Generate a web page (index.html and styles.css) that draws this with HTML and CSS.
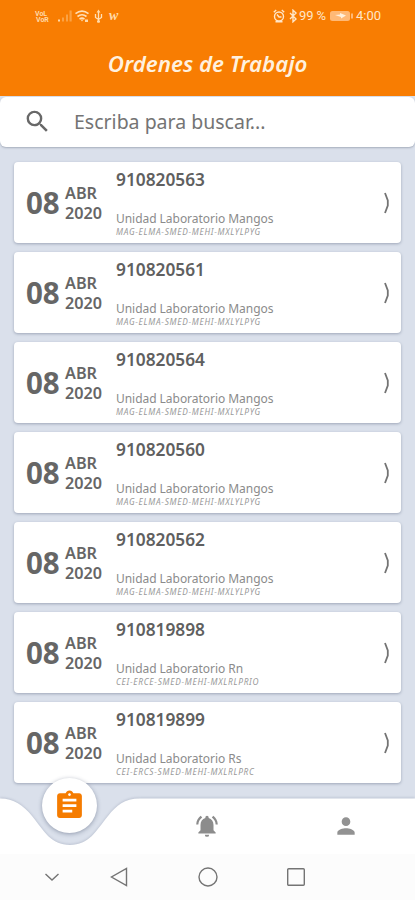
FILE: index.html
```
<!DOCTYPE html>
<html lang="es">
<head>
<meta charset="utf-8">
<meta name="viewport" content="width=device-width, initial-scale=1">
<title>Ordenes de Trabajo</title>
<link rel="stylesheet" href="styles.css">
</head>
<body>
<div class="app">
  <header class="header">
    <div class="status">
      <svg class="status-left" width="90" height="16" viewBox="0 0 90 16" fill="#ffd9a8">
        <text x="1" y="7.500" class="tiny">VoL</text><text x="2" y="14" class="tiny">VoR</text>
        <path d="M24 11.500h2v2h-2z"/>
        <g opacity=".4"><path d="M28 9.500h2v4h-2zM32 6.500h2v7h-2zM35.500 2.500h2.200v11h-2.200z"/></g>
        <g fill="none" stroke="#ffe0b8" stroke-width="1.600"><path d="M41.500 5.700q6.500-5.200 13 0M43.500 8.500q4.500-3.500 9 0M45.500 11.100q2.500-1.900 5 0"/><path d="M64.500 3v11.500M61.500 6v3.500l3 2 3-2V6" stroke-width="1.300"/></g>
        <path d="M46.500 11.500h3l-1.500 2zM51 11.500h3V14h-3zM62.500 4.500l2-3 2 3zM63 12.500h3v2h-3z"/>
        <text x="75" y="12" class="w-mark">w</text>
      </svg>
      <div class="status-right">
        <svg width="25" height="14" viewBox="0 0 25 14" fill="none" stroke="#ffe6c8" stroke-width="1.400"><circle cx="6" cy="7.500" r="4.500"/><path d="M.8 3.200L3.200 1M11.200 3.200L8.800 1M4 5.500l2 2.500h2.500M2.500 12.800h7M17 4l6 6-3 2.800V1.200L23 4l-6 6"/></svg>
        <span class="percent">99 %</span>
        <svg width="24" height="12" viewBox="0 0 24 12"><rect x="0" y="1" width="20" height="10" rx="2.500" fill="#ffb976"/><path d="M21 3.500h2v5h-2z" fill="#ffb976"/><path d="M5 5l5-.5V3l6 2.500-5 3V7z" fill="#fff0dc"/></svg>
        <span class="clock">4:00</span>
      </div>
    </div>
    <h1 class="title">Ordenes de Trabajo</h1>
  </header>

  <div class="search">
    <svg width="29" height="29" viewBox="0 0 24 24" fill="#686868"><path d="M15.500 14h-.79l-.28-.27A6.470 6.470 0 0 0 16 9.500 6.500 6.500 0 1 0 9.500 16c1.610 0 3.090-.59 4.230-1.570l.27.28v.79l5 4.990L20.490 19l-4.990-5zm-6 0C7.010 14 5 11.990 5 9.500S7.010 5 9.500 5 14 7.010 14 9.500 11.990 14 9.500 14z"/></svg>
    <span class="placeholder">Escriba para buscar...</span>
  </div>

  <main class="list">
    <article class="card"><div class="day">08</div><div class="date"><span>ABR</span><span>2020</span></div><div class="info"><div class="number">910820563</div><div class="unit">Unidad Laboratorio Mangos</div><div class="code">MAG-ELMA-SMED-MEHI-MXLYLPYG</div></div><svg class="chevron" viewBox="0 0 8 22"><path d="M3 1L5.800 8.500V13.500L3 21"/></svg></article>
    <article class="card"><div class="day">08</div><div class="date"><span>ABR</span><span>2020</span></div><div class="info"><div class="number">910820561</div><div class="unit">Unidad Laboratorio Mangos</div><div class="code">MAG-ELMA-SMED-MEHI-MXLYLPYG</div></div><svg class="chevron" viewBox="0 0 8 22"><path d="M3 1L5.800 8.500V13.500L3 21"/></svg></article>
    <article class="card"><div class="day">08</div><div class="date"><span>ABR</span><span>2020</span></div><div class="info"><div class="number">910820564</div><div class="unit">Unidad Laboratorio Mangos</div><div class="code">MAG-ELMA-SMED-MEHI-MXLYLPYG</div></div><svg class="chevron" viewBox="0 0 8 22"><path d="M3 1L5.800 8.500V13.500L3 21"/></svg></article>
    <article class="card"><div class="day">08</div><div class="date"><span>ABR</span><span>2020</span></div><div class="info"><div class="number">910820560</div><div class="unit">Unidad Laboratorio Mangos</div><div class="code">MAG-ELMA-SMED-MEHI-MXLYLPYG</div></div><svg class="chevron" viewBox="0 0 8 22"><path d="M3 1L5.800 8.500V13.500L3 21"/></svg></article>
    <article class="card"><div class="day">08</div><div class="date"><span>ABR</span><span>2020</span></div><div class="info"><div class="number">910820562</div><div class="unit">Unidad Laboratorio Mangos</div><div class="code">MAG-ELMA-SMED-MEHI-MXLYLPYG</div></div><svg class="chevron" viewBox="0 0 8 22"><path d="M3 1L5.800 8.500V13.500L3 21"/></svg></article>
    <article class="card"><div class="day">08</div><div class="date"><span>ABR</span><span>2020</span></div><div class="info"><div class="number">910819898</div><div class="unit">Unidad Laboratorio Rn</div><div class="code">CEI-ERCE-SMED-MEHI-MXLRLPRIO</div></div><svg class="chevron" viewBox="0 0 8 22"><path d="M3 1L5.800 8.500V13.500L3 21"/></svg></article>
    <article class="card"><div class="day">08</div><div class="date"><span>ABR</span><span>2020</span></div><div class="info"><div class="number">910819899</div><div class="unit">Unidad Laboratorio Rs</div><div class="code">CEI-ERCS-SMED-MEHI-MXLRLPRC</div></div><svg class="chevron" viewBox="0 0 8 22"><path d="M3 1L5.800 8.500V13.500L3 21"/></svg></article>
  </main>

  <nav class="tabs">
    <svg class="tabs-shape" width="415" height="56" viewBox="0 0 415 56"><path d="M0 .5C14 .5 23 7 32 18C44 33 51 47 70 47S96 33 108 18C117 7 124 .5 140 .5H415V56H0Z" fill="#fff"/></svg>
    <div class="tab tab-active"><span class="bubble"><svg width="33" height="33" viewBox="0 0 24 24" fill="#f57c00"><path d="M19 3h-4.180C14.400 1.840 13.300 1 12 1s-2.400.84-2.820 2H5c-1.100 0-2 .9-2 2v14c0 1.100.9 2 2 2h14c1.100 0 2-.9 2-2V5c0-1.100-.9-2-2-2zm-7 0c.55 0 1 .45 1 1s-.45 1-1 1-1-.45-1-1 .45-1 1-1zm2 14H7v-2h7v2zm3-4H7v-2h10v2zm0-4H7V7h10v2z"/></svg></span></div>
    <div class="tab"><svg width="26" height="26" viewBox="0 0 24 24" fill="#8c8c8c"><path d="M7.580 4.080L6.150 2.650C3.750 4.480 2.170 7.300 2.030 10.500h2a8.450 8.450 0 0 1 3.550-6.420zM19.970 10.500h2c-.15-3.200-1.730-6.020-4.120-7.850l-1.420 1.430a8.500 8.500 0 0 1 3.540 6.420zM18 11c0-3.070-1.640-5.640-4.500-6.320V4a1.500 1.500 0 0 0-3 0v.68C7.630 5.360 6 7.920 6 11v5l-2 2v1h16v-1l-2-2v-5zm-6 11a2 2 0 0 0 2-2h-4a2 2 0 0 0 2 2z"/></svg></div>
    <div class="tab"><svg width="26" height="26" viewBox="0 0 24 24" fill="#929292"><path d="M12 12c2.210 0 4-1.790 4-4s-1.790-4-4-4-4 1.790-4 4 1.790 4 4 4zm0 2c-2.670 0-8 1.340-8 4v2h16v-2c0-2.660-5.330-4-8-4z"/></svg></div>
  </nav>

  <footer class="system">
    <svg width="16" height="20" viewBox="0 0 16 20"><path d="M1.500 7L8 13l6.500-6"/></svg>
    <svg width="18" height="20" viewBox="0 0 18 20"><path d="M16.500 1.500v17L1.500 10z"/></svg>
    <svg width="20" height="20" viewBox="0 0 20 20"><circle cx="10" cy="10" r="9"/></svg>
    <svg width="20" height="20" viewBox="0 0 20 20"><rect x="1.700" y="1.700" width="16.600" height="16.600" rx="1"/></svg>
  </footer>
</div>
</body>
</html>
```
FILE: styles.css
```
* { box-sizing: border-box; }
body { margin: 0; font-family: "Noto Sans", "Open Sans", sans-serif; color: #666; }
.app { width: 415px; height: 900px; display: flex; flex-direction: column; background: #dae0eb; overflow: hidden; }
.header { height: 96px; flex: none; background: #f87d02; color: #fff1df; padding-top: 8px; }
.status { height: 16px; display: flex; justify-content: space-between; padding: 0 34px 0 34px; }
.tiny { font: 700 7px "Roboto", sans-serif; }
.w-mark { font: italic 700 14px "Liberation Serif", serif; }
.status-right { display: flex; align-items: center; font: 13px/16px "Roboto", sans-serif; color: #ffe6c8; }
.percent { width: 31px; white-space: nowrap; margin-left: 1px; letter-spacing: -0.1px; }
.clock { margin-left: 2px; }
.title { margin: 25px 0 0; text-align: center; font-size: 22.300px; line-height: 30px; font-style: italic; font-weight: 600; white-space: nowrap; }
.search { height: 50px; flex: none; margin-top: 1px; background: #fff; border-radius: 6px; display: flex; align-items: center; padding: 0 0 2px 23px; gap: 22px; box-shadow: 0 1px 2px rgba(70, 80, 100, .35); }
.placeholder { font-size: 19.500px; color: #747474; white-space: nowrap; }
.list { height: 651px; flex: none; padding: 15px 14px 0; display: flex; flex-direction: column; gap: 9px; }
.card { height: 81px; flex: none; background: #fff; border-radius: 4px; display: flex; align-items: center; padding: 0 11px 0 12px; box-shadow: 0 1px 3px rgba(70, 80, 110, .4); }
.day { width: 39px; font-size: 29.500px; font-weight: 700; line-height: 40px; }
.date { width: 51px; display: flex; flex-direction: column; font-size: 16.200px; font-weight: 600; line-height: 20px; }
.info { flex: 1; height: 81px; padding-top: 6px; white-space: nowrap; }
.number { font-size: 17.300px; font-weight: 600; line-height: 24px; color: #606060; }
.unit { margin-top: 19px; font-size: 12px; line-height: 16px; letter-spacing: -.04px; color: #8b8b8b; }
.code { font-size: 8.300px; line-height: 9px; font-style: italic; letter-spacing: .72px; color: #999; }
.chevron { width: 8px; height: 22px; fill: none; stroke: #747474; stroke-width: 1.800; }
.tabs { height: 56px; flex: none; position: relative; display: grid; grid-template-columns: repeat(3, 1fr); }
.tabs-shape { position: absolute; inset: 0; filter: drop-shadow(0 -1px 1px rgba(80, 90, 120, .2)); }
.tab { position: relative; display: flex; align-items: center; justify-content: center; }
.bubble { width: 55px; height: 55px; margin: -42px 0 0 1px; border-radius: 50%; background: #fff; display: flex; align-items: center; justify-content: center; box-shadow: 0 1px 4px rgba(60, 70, 100, .45); }
.system { height: 46px; flex: none; position: relative; background: #fcfcfc; display: flex; align-items: center; padding: 0 0 0 44px; }
.system svg { fill: none; stroke: #747474; stroke-width: 1.400; }
.system svg:nth-child(2) { margin-left: 50px; }
.system svg:nth-child(3) { margin-left: 70px; }
.system svg:nth-child(4) { margin-left: 68px; }
```
